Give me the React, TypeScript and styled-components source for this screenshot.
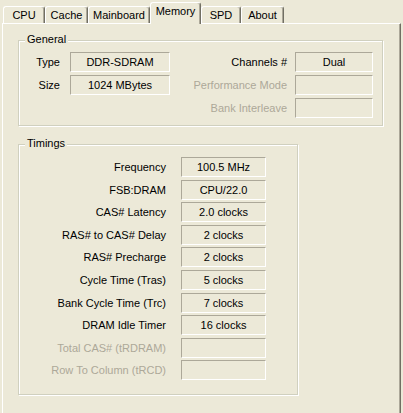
import React from "react";
import styled, { createGlobalStyle } from "styled-components";

const GlobalStyle = createGlobalStyle`
  html, body { margin: 0; padding: 0; background: #ece9d8; }
  body { font-family: "Liberation Sans", Arial, sans-serif; font-size: 11px; color: #000; }
`;

const Window = styled.div`
  width: 403px;
  height: 413px;
  overflow: hidden;
  background: #ece9d8;
  display: flex;
  flex-direction: column;
`;

const TabStrip = styled.div`
  display: flex;
  align-items: flex-end;
  height: 23px;
  padding-left: 3px;
  position: relative;
  z-index: 1;
`;

const Tab = styled.div<{ $w: number; $active?: boolean }>`
  box-sizing: border-box;
  width: ${(p) => p.$w}px;
  height: ${(p) => (p.$active ? 22 : 17)}px;
  margin-bottom: ${(p) => (p.$active ? -1 : 0)}px;
  border-top: 1px solid #fff;
  border-left: 1px solid #fff;
  border-right: 1px solid #716f64;
  box-shadow: inset -1px 0 0 #aca899;
  border-radius: 3px 3px 0 0;
  background: #ece9d8;
  display: flex;
  justify-content: center;
  padding-top: 2px;
  line-height: 13px;
  white-space: nowrap;
`;

const Page = styled.div`
  box-sizing: border-box;
  margin-left: 2px;
  width: 399px;
  height: 390px;
  border-top: 1px solid #fff;
  border-left: 1px solid #fff;
  border-right: 1px solid #716f64;
  box-shadow: inset -1px 0 0 #aca899;
  padding: 16px 0 0 15px;
  display: flex;
  flex-direction: column;
  gap: 18px;
`;

const GroupBox = styled.div<{ $w: number; $h: number }>`
  position: relative;
  box-sizing: border-box;
  width: ${(p) => p.$w}px;
  height: ${(p) => p.$h}px;
  border: 1px solid #d0d0bf;
  box-shadow: inset 1px 1px 0 #fff, 1px 1px 0 #fff;
`;

const Legend = styled.span`
  position: absolute;
  top: -8px;
  left: 6px;
  padding: 0 2px;
  background: #ece9d8;
  line-height: 13px;
`;

const GeneralGrid = styled.div`
  padding-top: 11px;
  display: grid;
  grid-template-columns: 51px 100px 125px 78px;
  grid-auto-rows: 20px;
  row-gap: 3px;
`;

const TimingsGrid = styled.div`
  padding-top: 12px;
  display: grid;
  grid-template-columns: 162px 85px;
  grid-auto-rows: 20px;
  row-gap: 2.6px;
`;

const Label = styled.div<{ $pr: number; $disabled?: boolean }>`
  text-align: right;
  padding-right: ${(p) => p.$pr}px;
  color: ${(p) => (p.$disabled ? "#aca899" : "#000")};
  line-height: 20px;
  white-space: nowrap;
`;

const Field = styled.div`
  box-sizing: border-box;
  height: 20px;
  border-top: 1px solid #aca899;
  border-left: 1px solid #aca899;
  border-bottom: 1px solid #fff;
  border-right: 1px solid #fff;
  display: flex;
  align-items: center;
  justify-content: center;
  line-height: 18px;
  white-space: nowrap;
`;

const Empty = styled.div``;

const tabs: { name: string; w: number; active?: boolean }[] = [
  { name: "CPU", w: 42 },
  { name: "Cache", w: 43 },
  { name: "Mainboard", w: 62 },
  { name: "Memory", w: 51, active: true },
  { name: "SPD", w: 40 },
  { name: "About", w: 43 },
];

const timings: { label: string; value: string; disabled?: boolean }[] = [
  { label: "Frequency", value: "100.5 MHz" },
  { label: "FSB:DRAM", value: "CPU/22.0" },
  { label: "CAS# Latency", value: "2.0 clocks" },
  { label: "RAS# to CAS# Delay", value: "2 clocks" },
  { label: "RAS# Precharge", value: "2 clocks" },
  { label: "Cycle Time (Tras)", value: "5 clocks" },
  { label: "Bank Cycle Time (Trc)", value: "7 clocks" },
  { label: "DRAM Idle Timer", value: "16 clocks" },
  { label: "Total CAS# (tRDRAM)", value: "", disabled: true },
  { label: "Row To Column (tRCD)", value: "", disabled: true },
];

export default function App() {
  return (
    <>
      <GlobalStyle />
      <Window>
        <TabStrip>
          {tabs.map((t) => (
            <Tab key={t.name} $w={t.w} $active={t.active}>
              {t.name}
            </Tab>
          ))}
        </TabStrip>
        <Page>
          <GroupBox $w={365} $h={86}>
            <Legend>General</Legend>
            <GeneralGrid>
              <Label $pr={10}>Type</Label>
              <Field>DDR-SDRAM</Field>
              <Label $pr={8}>Channels #</Label>
              <Field>Dual</Field>

              <Label $pr={10}>Size</Label>
              <Field>1024 MBytes</Field>
              <Label $pr={8} $disabled>
                Performance Mode
              </Label>
              <Field />

              <Empty />
              <Empty />
              <Label $pr={8} $disabled>
                Bank Interleave
              </Label>
              <Field />
            </GeneralGrid>
          </GroupBox>
          <GroupBox $w={280} $h={251}>
            <Legend>Timings</Legend>
            <TimingsGrid>
              {timings.map((r) => (
                <React.Fragment key={r.label}>
                  <Label $pr={15} $disabled={r.disabled}>
                    {r.label}
                  </Label>
                  <Field>{r.value}</Field>
                </React.Fragment>
              ))}
            </TimingsGrid>
          </GroupBox>
        </Page>
      </Window>
    </>
  );
}
